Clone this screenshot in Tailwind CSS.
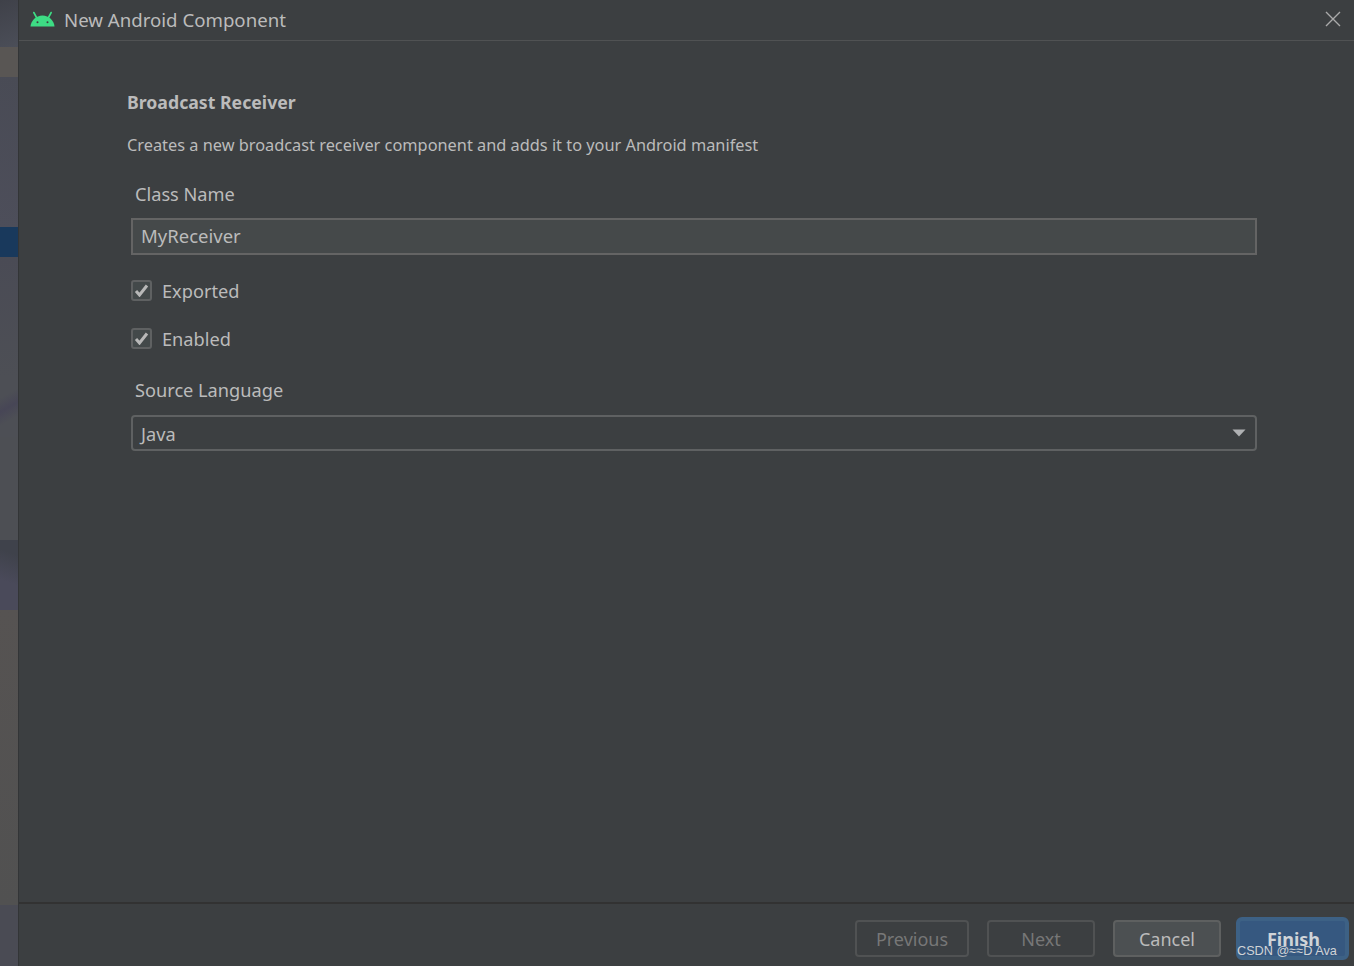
<!DOCTYPE html>
<html lang="en">
<head>
  <meta charset="UTF-8" />
  <title>New Android Component</title>
  <script src="https://cdn.jsdelivr.net/npm/@tailwindcss/browser@4"></script>
</head>
<body class="bg-[#3c3f41] overflow-hidden font-['Noto_Sans',sans-serif] text-[#bbbbbb]">
  <div class="flex h-[966px] w-[1354px]">
    <!-- window behind the dialog -->
    <div class="w-[19px] shrink-0 flex flex-col border-r border-[#333537]">
      <div class="h-[47px] bg-[linear-gradient(160deg,#3f4149,#4b4e58)]"></div>
      <div class="h-[30px] bg-[#595654]"></div>
      <div class="h-[150px] bg-[linear-gradient(200deg,#494b55,#4d4e5a)]"></div>
      <div class="h-[30px] bg-[#19395c]"></div>
      <div class="h-[120px] bg-[linear-gradient(180deg,#4a4b55,#4d4f55)]"></div>
      <div class="h-[60px] bg-[linear-gradient(150deg,#4d4f55_30%,#474656_50%,#4d4f55_70%)]"></div>
      <div class="h-[103px] bg-[#4d4f54]"></div>
      <div class="h-[70px] bg-[linear-gradient(200deg,#3f424b_20%,#4a4a5a_60%)]"></div>
      <div class="h-[295px] bg-[linear-gradient(180deg,#565352,#515151)]"></div>
      <div class="flex-1 bg-[#4a4b54]"></div>
    </div>

    <div class="flex-1 flex flex-col min-w-0">
      <!-- title bar -->
      <div class="h-[41px] shrink-0 flex items-center border-b border-[#505253] pl-[11px] pr-[13px]">
        <svg width="25" height="16" viewBox="0 0 25 16" class="mr-[9px] mb-[3px]">
          <path d="M0.5 15.5C1 9.5 6 4.5 12.5 4.5S24 9.5 24.5 15.5Z" fill="#3ddc84"/>
          <path d="M6.5 6.5L3.8 1.5M18.5 6.5L21.2 1.5" stroke="#3ddc84" stroke-width="1.6" stroke-linecap="round"/>
          <circle cx="7.5" cy="11.2" r="1" fill="#3c3f41"/>
          <circle cx="17.5" cy="11.2" r="1" fill="#3c3f41"/>
        </svg>
        <span class="text-[18.65px] leading-none">New Android Component</span>
        <svg width="16" height="16" viewBox="0 0 16 16" class="ml-auto mb-[3px]">
          <path d="M1 1L15 15M15 1L1 15" stroke="#aaaaaa" stroke-width="1.4"/>
        </svg>
      </div>

      <!-- form -->
      <div class="flex-1 pl-[108px] pr-[97px]">
        <h1 class="mt-[49px] text-[17.7px] leading-[24px] font-bold text-[#bbbbbb]">Broadcast Receiver</h1>
        <p class="mt-[19px] text-[16.33px] leading-[24px]">Creates a new broadcast receiver component and adds it to your Android manifest</p>

        <label class="block mt-[24px] ml-[8px] text-[18.2px] leading-[26px]">Class Name</label>
        <div class="mt-[11px] ml-[4px] h-[37px] border-2 border-[#646464] bg-[#45494a] flex items-center pl-[8px] text-[18.5px]"><span class="-mt-[2px]">MyReceiver</span></div>

        <div class="mt-[24px] ml-[4px] flex items-center h-[24px]">
          <span class="-mt-[2px] w-[21px] h-[21px] rounded-[3px] border-2 border-[#5f6162] bg-[#43494a] flex items-center justify-center">
            <svg width="15" height="13" viewBox="0 0 15 13"><path d="M2 7L5.5 11L13 1.5" fill="none" stroke="#b8b8b8" stroke-width="3"/></svg>
          </span>
          <span class="ml-[10px] mt-[2px] text-[18.2px]">Exported</span>
        </div>
        <div class="mt-[24px] ml-[4px] flex items-center h-[24px]">
          <span class="-mt-[2px] w-[21px] h-[21px] rounded-[3px] border-2 border-[#5f6162] bg-[#43494a] flex items-center justify-center">
            <svg width="15" height="13" viewBox="0 0 15 13"><path d="M2 7L5.5 11L13 1.5" fill="none" stroke="#b8b8b8" stroke-width="3"/></svg>
          </span>
          <span class="ml-[10px] mt-[2px] text-[18.2px]">Enabled</span>
        </div>

        <label class="block mt-[26px] ml-[8px] text-[18.2px] leading-[26px]">Source Language</label>
        <div class="mt-[12px] ml-[4px] h-[36px] rounded-[4px] border-2 border-[#5f6162] flex items-center pl-[8px] pr-[9px] text-[18.2px]">
          <span class="mt-[3px]">Java</span>
          <svg width="14" height="8" viewBox="0 0 14 8" class="ml-auto"><path d="M0.5 0.5H13.5L7 7.5Z" fill="#afb1b3"/></svg>
        </div>
      </div>

      <!-- footer -->
      <div class="h-[64px] shrink-0 border-t-2 border-[#323232] flex items-start pt-[16px] pr-[5px] justify-end text-[18px]">
        <button class="w-[114px] h-[37px] pt-[2px] rounded-[4px] border-2 border-[#505253] text-[#777777]">Previous</button>
        <button class="ml-[18px] w-[108px] h-[37px] pt-[2px] rounded-[4px] border-2 border-[#505253] text-[#777777]">Next</button>
        <button class="ml-[18px] w-[108px] h-[37px] pt-[2px] rounded-[4px] border-2 border-[#5e6060] bg-[#4c5052]">Cancel</button>
        <div class="relative ml-[15px] -mt-[3px] w-[113px] h-[43px] rounded-[6px] border-[4px] border-[#3d6185] bg-[#365880] flex items-center justify-center">
          <span class="font-bold text-[#d0d4d8] mt-[1px] ml-[2px]">Finish</span>
          <span class="absolute left-[-3px] bottom-[-2px] font-['Liberation_Sans',sans-serif] text-[12.7px] leading-[14px] whitespace-nowrap text-[#d0d3d6]">CSDN @≈≈D Ava</span>
        </div>
      </div>
    </div>
  </div>
</body>
</html>
